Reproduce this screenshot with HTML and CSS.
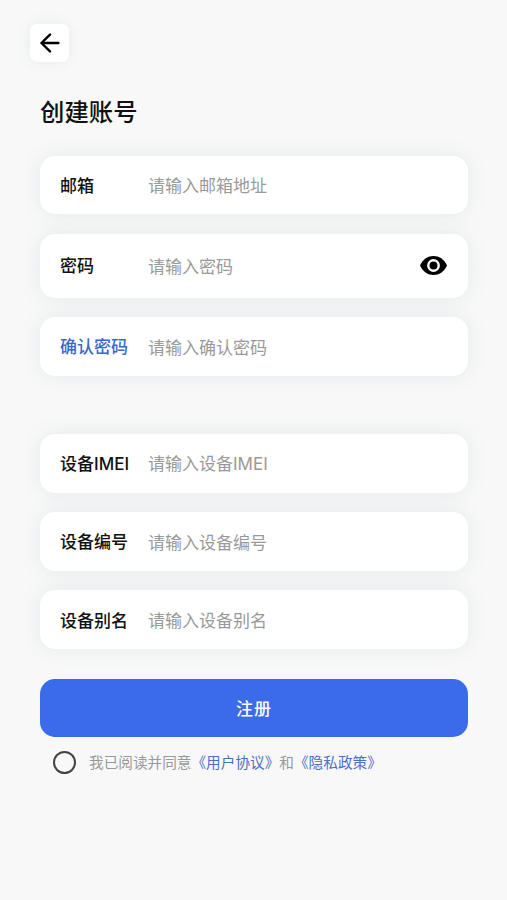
FILE: index.html
```
<!DOCTYPE html>
<html lang="zh-CN">
<head>
    <meta charset="UTF-8">
    <meta name="viewport" content="width=device-width, initial-scale=1.0">
    <title>创建账号</title>
    <link rel="stylesheet" href="styles.css">
</head>
<body>
    <header>
        <a href="#" class="back" aria-label="返回">
            <svg width="20" height="20" viewBox="0 0 20 20">
                <path d="M18.4 10H1.6M10 1.6L1.4 10L10 18.4" />
            </svg>
        </a>
    </header>

    <main>
        <h1>创建账号</h1>
        <form>
            <div class="group">
                <div class="field">
                    <label for="email">邮箱</label>
                    <input type="email" id="email" placeholder="请输入邮箱地址">
                </div>
                <div class="field field-password">
                    <label for="password">密码</label>
                    <input type="password" id="password" placeholder="请输入密码">
                    <button type="button" class="eye" aria-label="显示密码">
                        <svg width="27" height="19" viewBox="0 0 27 19">
                            <path d="M0 9.5C3 3 8 0 13.5 0S24 3 27 9.5C24 16 19 19 13.5 19S3 16 0 9.5Z" fill="#000" />
                            <circle cx="13.5" cy="9.5" r="5.2" fill="#000" stroke="#fff" stroke-width="2.4" />
                        </svg>
                    </button>
                </div>
                <div class="field active">
                    <label for="confirm">确认密码</label>
                    <input type="password" id="confirm" placeholder="请输入确认密码">
                </div>
            </div>

            <div class="group">
                <div class="field">
                    <label for="imei">设备IMEI</label>
                    <input type="text" id="imei" placeholder="请输入设备IMEI">
                </div>
                <div class="field">
                    <label for="number">设备编号</label>
                    <input type="text" id="number" placeholder="请输入设备编号">
                </div>
                <div class="field">
                    <label for="alias">设备别名</label>
                    <input type="text" id="alias" placeholder="请输入设备别名">
                </div>
            </div>

            <button type="submit" class="submit">注册</button>

            <div class="agreement">
                <input type="checkbox" id="agree">
                <label for="agree">我已阅读并同意<a href="#">《用户协议》</a>和<a href="#">《隐私政策》</a></label>
            </div>
        </form>
    </main>
</body>
</html>
```
FILE: styles.css
```
* {
    box-sizing: border-box;
}

body {
    margin: 0;
    min-height: 100vh;
    background: #f8f8f8;
    color: #111;
    font-family: Inter, "Noto Sans CJK SC", sans-serif;
    text-spacing-trim: space-all;
}

header {
    padding: 24px 30px 0;
}

.back {
    display: flex;
    align-items: center;
    justify-content: center;
    width: 39px;
    height: 38px;
    background: #fff;
    border-radius: 7px;
    box-shadow: 0 0 14px rgba(90, 120, 140, 0.1);
}

.back svg {
    fill: none;
    stroke: #000;
    stroke-width: 2.4;
    stroke-linecap: round;
    stroke-linejoin: round;
}

main {
    padding: 32px 39px 0 40px;
}

h1 {
    margin: 0 0 25.5px;
    font-size: 24.4px;
    font-weight: 500;
    line-height: 36px;
}

.group {
    display: flex;
    flex-direction: column;
    gap: 19.6px;
    margin-bottom: 58.2px;
}

.group + .group {
    margin-bottom: 29.8px;
}

.field {
    display: flex;
    align-items: center;
    height: 58.6px;
    padding: 0 21px 0 20px;
    background: #fff;
    border-radius: 15px;
    box-shadow: 0 0 20px rgba(90, 120, 140, 0.12);
}

.field-password {
    height: 64px;
}

.field label {
    width: 88px;
    padding-bottom: 1.4px;
    font-size: 17px;
    font-weight: 500;
    white-space: nowrap;
}

.field.active label {
    color: #3a66cf;
}

.field input {
    flex: 1;
    min-width: 0;
    padding: 2px 0 0;
    border: none;
    outline: none;
    background: none;
    color: #111;
    font-family: inherit;
    font-size: 17px;
}

.field input::placeholder {
    color: #999;
}

.eye {
    display: flex;
    padding: 0;
    border: none;
    background: none;
}

.submit {
    display: block;
    width: 100%;
    height: 58.6px;
    padding: 0 0 2px;
    border: none;
    border-radius: 15px;
    background: #3b6bea;
    color: #fff;
    font-family: inherit;
    font-size: 17px;
    font-weight: 500;
    letter-spacing: 1px;
}

.agreement {
    display: flex;
    align-items: center;
    gap: 13px;
    padding: 12.6px 13px 0;
}

.agreement input {
    appearance: none;
    flex: none;
    width: 23px;
    height: 23px;
    margin: 0;
    border: 2px solid #444;
    border-radius: 50%;
}

.agreement label {
    padding-top: 2px;
    color: #999;
    font-size: 14.65px;
    line-height: 23px;
    white-space: nowrap;
}

.agreement a {
    color: #4a6fc4;
    text-decoration: none;
}
```
